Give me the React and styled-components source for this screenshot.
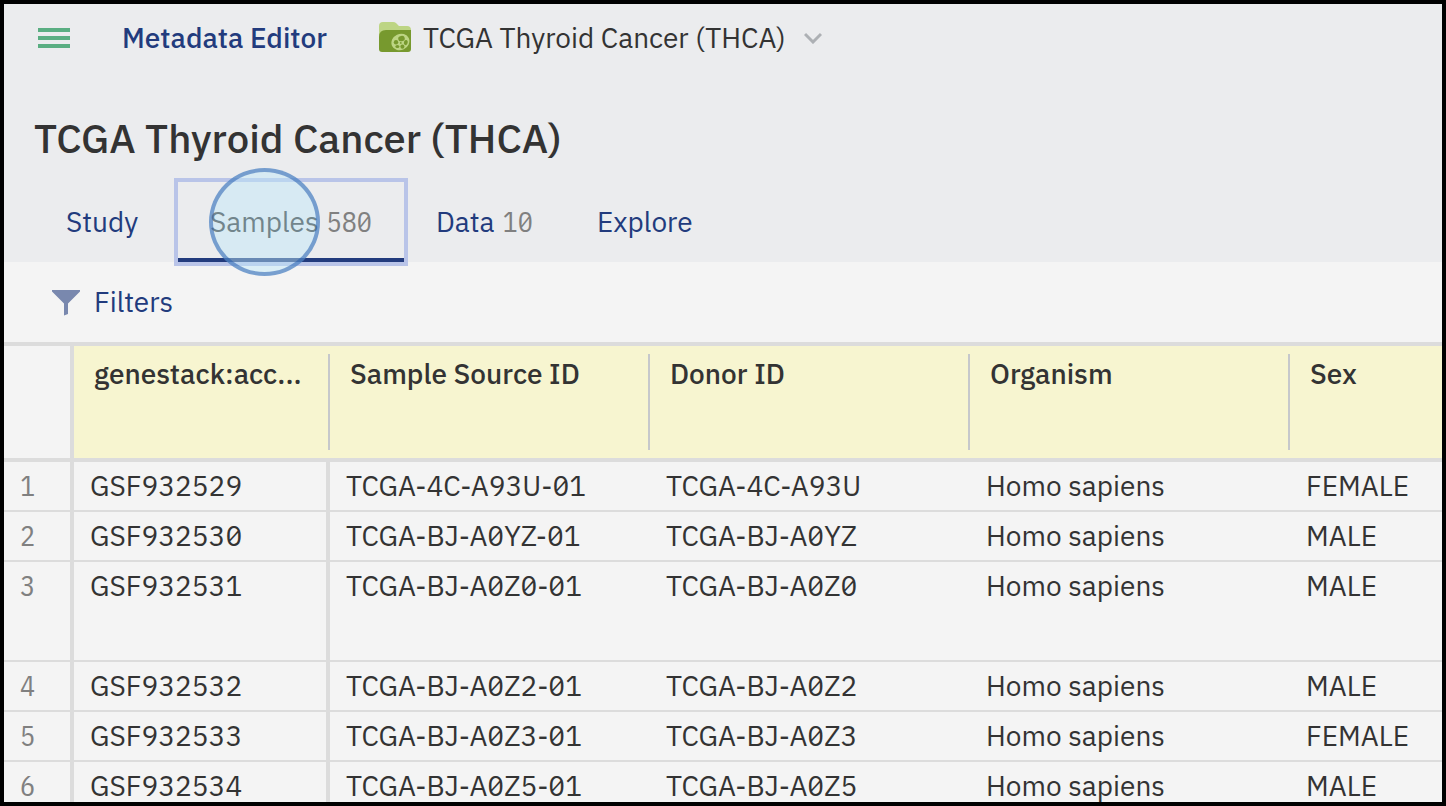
import React, { useState } from 'react';
import styled, { createGlobalStyle } from 'styled-components';

const GlobalStyle = createGlobalStyle`
  *, *::before, *::after { box-sizing: border-box; }
  body { margin: 0; background: #000; }
  button { font: inherit; border: 0; background: none; padding: 0; cursor: pointer; }
`;

const Frame = styled.main`
  height: 100vh;
  overflow: hidden;
  border: 4px solid #000;
  background: #f4f4f4;
  color: #333;
  font-family: 'IBM Plex Sans', Inter, sans-serif;
  font-size: 28px;
  line-height: 32px;
  font-feature-settings: 'zero';
`;

const Header = styled.header`
  background: #ebecee;
`;

const TopBar = styled.div`
  display: flex;
  align-items: center;
  height: 68px;
  padding: 0 34px;
`;

const MenuButton = styled.button`
  display: flex;
  margin-right: 52px;
`;

const AppLink = styled.a`
  width: 257px;
  color: #223b7d;
  font-weight: 500;
  text-decoration: none;
  white-space: nowrap;
`;

const StudyButton = styled.button`
  display: flex;
  align-items: center;
  gap: 12px;
  color: #333;
  white-space: nowrap;
`;

const Chevron = styled.svg`
  margin-left: 6px;
`;

const Title = styled.h1`
  margin: 0;
  padding: 41px 30px 19px;
  font-size: 40px;
  line-height: 50px;
  font-weight: 500;
`;

const Tabs = styled.nav`
  display: flex;
  padding-left: 30px;
`;

const Tab = styled.button`
  position: relative;
  width: ${(p) => p.$width}px;
  height: 80px;
  padding: 4px 0 0 32px;
  text-align: left;
  white-space: nowrap;
  color: ${(p) => (p.$active ? '#333' : '#223b7d')};
  border-bottom: 4px solid ${(p) => (p.$active ? '#223b7d' : 'transparent')};
  outline: ${(p) => (p.$active ? '4px solid #b9c4e8' : 'none')};
`;

const Count = styled.span`
  margin-left: 8px;
  color: #808080;
  font-family: 'IBM Plex Sans Condensed', 'IBM Plex Sans', Roboto, sans-serif;
`;

const ClickMarker = styled.span`
  position: absolute;
  left: 31px;
  top: -14px;
  width: 111px;
  height: 108px;
  border: 4px solid rgba(36, 92, 176, 0.54);
  border-radius: 50%;
  background: rgba(190, 232, 248, 0.45);
`;

const FilterBar = styled.div`
  display: flex;
  align-items: center;
  height: 80px;
  padding: 0 48px;
`;

const FilterButton = styled.button`
  display: flex;
  align-items: center;
  gap: 14px;
  color: #223b7d;
`;

const Table = styled.table`
  width: 100%;
  table-layout: fixed;
  border-collapse: separate;
  border-spacing: 0;
  border-top: 4px solid #dcdcdc;
`;

const Col = styled.col`
  width: ${(p) => (p.$width ? `${p.$width}px` : 'auto')};
`;

const CornerCell = styled.td`
  border-right: 4px solid #dcdcdc;
  border-bottom: 4px solid #dcdcdc;
`;

const HeadCell = styled.th`
  height: 116px;
  padding: 8px 0;
  vertical-align: top;
  text-align: left;
  font-weight: 500;
  background: #f7f5d0;
  border-bottom: 4px solid #dcdcdc;
`;

const HeadLabel = styled.div`
  height: 96px;
  padding: 4px 20px;
  white-space: nowrap;
  border-right: ${(p) => (p.$last ? 'none' : '2px solid #c6c8cb')};
`;

const NumberCell = styled.th`
  padding: 8px 0 0 16px;
  vertical-align: top;
  text-align: left;
  font-family: 'IBM Plex Sans Condensed', 'IBM Plex Sans', Roboto, sans-serif;
  font-weight: 400;
  color: #808080;
  border-right: 4px solid #dcdcdc;
  border-bottom: 2px solid #dcdcdc;
`;

const Cell = styled.td`
  height: ${(p) => (p.$tall ? 100 : 50)}px;
  padding: 8px 0 0 16px;
  vertical-align: top;
  white-space: nowrap;
  border-right: ${(p) => (p.$divider ? '4px solid #dcdcdc' : 'none')};
  border-bottom: 2px solid #dcdcdc;
`;

const columns = ['genestack:acc...', 'Sample Source ID', 'Donor ID', 'Organism', 'Sex'];

const rows = [
  ['GSF932529', 'TCGA-4C-A93U-01', 'TCGA-4C-A93U', 'Homo sapiens', 'FEMALE'],
  ['GSF932530', 'TCGA-BJ-A0YZ-01', 'TCGA-BJ-A0YZ', 'Homo sapiens', 'MALE'],
  ['GSF932531', 'TCGA-BJ-A0Z0-01', 'TCGA-BJ-A0Z0', 'Homo sapiens', 'MALE'],
  ['GSF932532', 'TCGA-BJ-A0Z2-01', 'TCGA-BJ-A0Z2', 'Homo sapiens', 'MALE'],
  ['GSF932533', 'TCGA-BJ-A0Z3-01', 'TCGA-BJ-A0Z3', 'Homo sapiens', 'FEMALE'],
  ['GSF932534', 'TCGA-BJ-A0Z5-01', 'TCGA-BJ-A0Z5', 'Homo sapiens', 'MALE'],
];

const tabs = [
  { label: 'Study', width: 144 },
  { label: 'Samples', count: 580, width: 226 },
  { label: 'Data', count: 10, width: 161 },
  { label: 'Explore', width: 160 },
];

const MenuIcon = () => (
  <svg width="32" height="20" viewBox="0 0 32 20" fill="#5aae82" aria-hidden="true">
    <rect width="32" height="4" />
    <rect y="8" width="32" height="4" />
    <rect y="16" width="32" height="4" />
  </svg>
);

const FolderIcon = () => (
  <svg width="32" height="32" viewBox="0 0 32 32" aria-hidden="true">
    <path d="M0 4Q0 0 4 0H14Q16 0 17 1L20 4H28Q32 4 32 8V16H0Z" fill="#bdd584" />
    <path d="M0 15Q0 8 7 8H32V27Q32 30 29 30H3Q0 30 0 27Z" fill="#77992e" />
    <ellipse cx="21.4" cy="20" rx="9.2" ry="8" transform="rotate(-25 21.4 20)" fill="#bdd584" />
    <g fill="#77992e">
      <ellipse cx="22.5" cy="16.6" rx="3.3" ry="2.7" transform="rotate(-10 22.5 16.6)" />
      <ellipse cx="17" cy="20.2" rx="2.2" ry="2.3" />
      <ellipse cx="26.8" cy="20.6" rx="1.9" ry="2.6" transform="rotate(15 26.8 20.6)" />
      <circle cx="21.8" cy="20.9" r="0.9" />
      <ellipse cx="18.4" cy="24.6" rx="2" ry="1.5" />
      <ellipse cx="23.4" cy="24.6" rx="2" ry="2.2" />
    </g>
  </svg>
);

const FunnelIcon = () => (
  <svg width="28" height="24" viewBox="0 0 28 24" fill="#7988ae" overflow="visible" aria-hidden="true">
    <path d="M0 0H28V1.5L16 13.5V24L12 25.5V13.5L0 1.5Z" />
  </svg>
);

export default function App() {
  const [active, setActive] = useState('Samples');

  return (
    <Frame>
      <GlobalStyle />
      <Header>
        <TopBar>
          <MenuButton type="button" aria-label="Menu"><MenuIcon /></MenuButton>
          <AppLink href="#editor">Metadata Editor</AppLink>
          <StudyButton type="button">
            <FolderIcon />
            TCGA Thyroid Cancer (THCA)
            <Chevron width="18" height="12" viewBox="0 0 18 12" fill="none" stroke="#adb0b4" strokeWidth="3" aria-hidden="true">
              <path d="M1 2L9 10L17 2" />
            </Chevron>
          </StudyButton>
        </TopBar>
        <Title>TCGA Thyroid Cancer (THCA)</Title>
        <Tabs>
          {tabs.map((tab) => (
            <Tab
              key={tab.label}
              type="button"
              $width={tab.width}
              $active={tab.label === active}
              onClick={() => setActive(tab.label)}
            >
              {tab.label}
              {tab.count && <Count>{tab.count}</Count>}
              {tab.label === active && <ClickMarker />}
            </Tab>
          ))}
        </Tabs>
      </Header>
      <FilterBar>
        <FilterButton type="button"><FunnelIcon />Filters</FilterButton>
      </FilterBar>
      <Table>
        <colgroup>
          <Col $width={70} />
          <Col $width={256} />
          <Col $width={320} />
          <Col $width={320} />
          <Col $width={320} />
          <Col />
        </colgroup>
        <thead>
          <tr>
            <CornerCell />
            {columns.map((name, i) => (
              <HeadCell key={name} scope="col">
                <HeadLabel $last={i === columns.length - 1}>{name}</HeadLabel>
              </HeadCell>
            ))}
          </tr>
        </thead>
        <tbody>
          {rows.map((row, r) => (
            <tr key={row[0]}>
              <NumberCell scope="row">{r + 1}</NumberCell>
              {row.map((value, c) => (
                <Cell key={c} $tall={r === 2} $divider={c === 0}>{value}</Cell>
              ))}
            </tr>
          ))}
        </tbody>
      </Table>
    </Frame>
  );
}
